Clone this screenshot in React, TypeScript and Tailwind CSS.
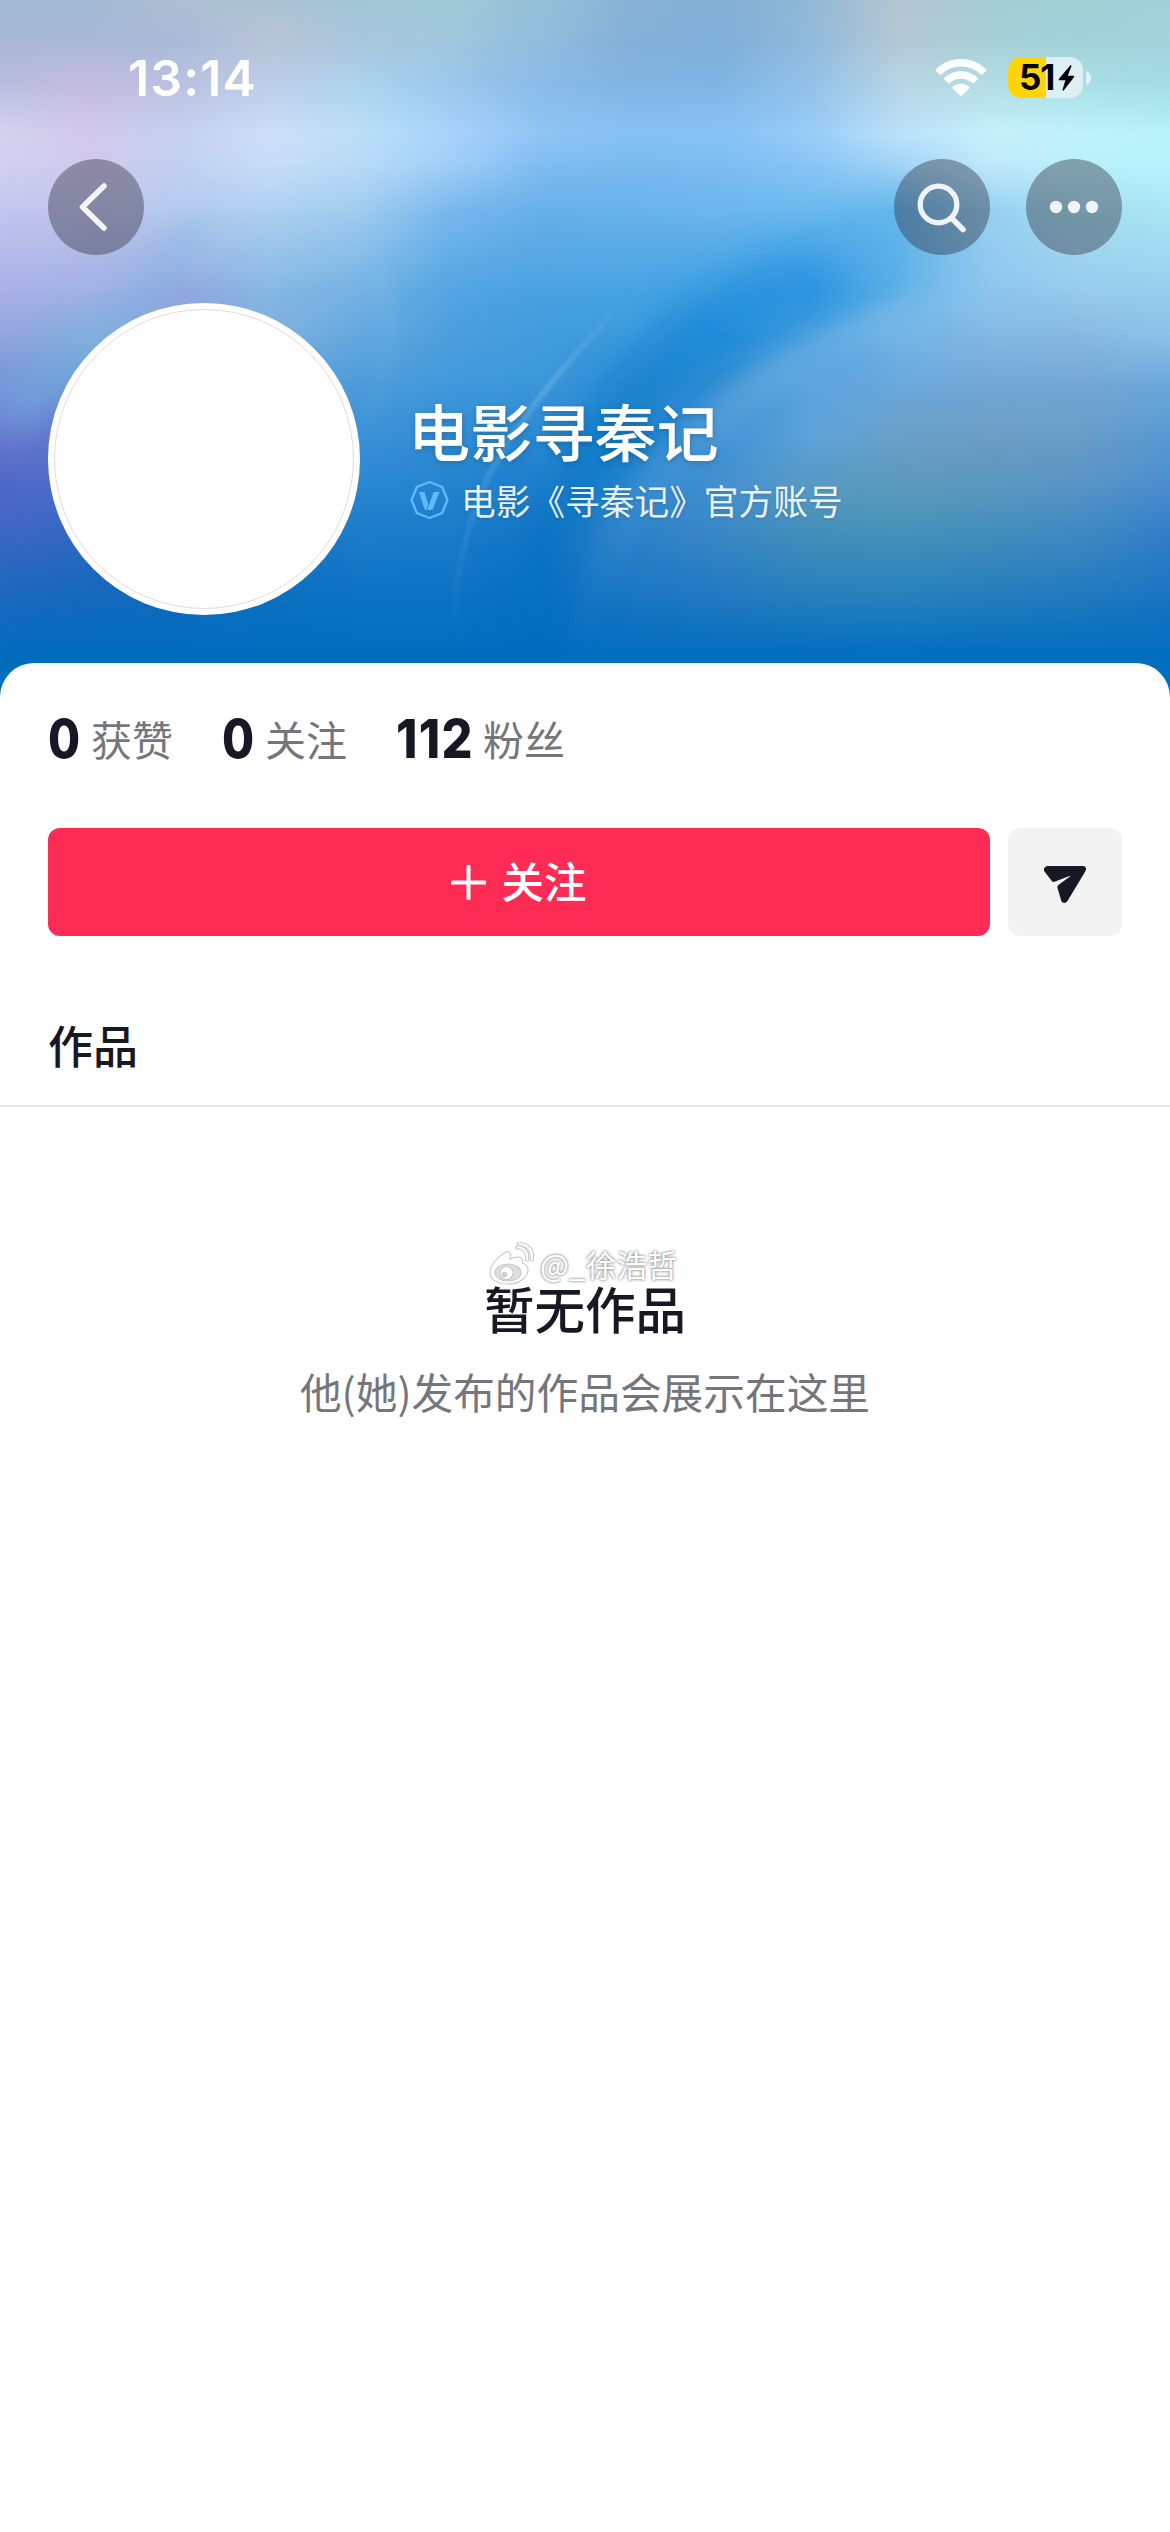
import React from "react";

const WALL_W = 1170;
const WALL_H = 720;

type Row = { y: number; colors: string[] };

/* Colour rows of the wallpaper, 14 evenly spaced stops each, left to right. */
const ROWS: Row[] = [
  { y: 0, colors: ["#9fb8d2", "#a3bad2", "#b0bfd2", "#a9c2d2", "#a0c6d6", "#a1cad6", "#96bfd6", "#88b4d4", "#84b0d4", "#92b8d4", "#b4c6d0", "#a4cdd2", "#a3d1d4", "#a4d2d8"] },
  { y: 40, colors: ["#a8b9d6", "#a9b8d6", "#a9bbd6", "#b8c4d6", "#a8c5da", "#a1c7dc", "#92bcdc", "#84b1d8", "#80afd8", "#90b9da", "#b4c8d4", "#a8d0d6", "#a2d2d8", "#a3d3dc"] },
  { y: 80, colors: ["#b8bbdc", "#c2bbdd", "#b8c1e0", "#bccce6", "#acd2ec", "#9cc7ea", "#8abae6", "#82b4e2", "#80b4e2", "#92c0e6", "#b8d4e2", "#b2dce4", "#a6dde4", "#a4dbe4"] },
  { y: 135, colors: ["#d4d3ef", "#d2c9ea", "#c6d0f0", "#cfe0f8", "#bce0f8", "#a9d2fa", "#90c5f4", "#85c0f2", "#86c2f4", "#98ccf8", "#bce2fa", "#c8f0fa", "#c0f3fc", "#baf2fa"] },
  { y: 165, colors: ["#d1d0f0", "#d0c9ed", "#c1d0f2", "#c7def8", "#b8daf6", "#a0cef8", "#7fbcf0", "#7abaee", "#7cbcf0", "#88c4f4", "#a0d4f6", "#c0e8fb", "#baf0fa", "#b8f2fb"] },
  { y: 210, colors: ["#c2c6ee", "#c2c3ea", "#b6cbee", "#aed0f0", "#a0ccef", "#78b8ec", "#68b0e8", "#68b3ea", "#6cb6ec", "#6cbaee", "#62b6ec", "#98d0f2", "#a6dff2", "#aae6f4"] },
  { y: 290, colors: ["#aab0e6", "#a2b2e4", "#92a8de", "#86b8e2", "#74b2e2", "#54a5e2", "#4aa2e0", "#48a3e2", "#3fa0e2", "#3098e2", "#62b2e8", "#8ec5ec", "#98cbec", "#98ceec"] },
  { y: 335, colors: ["#94a6de", "#84acdc", "#8c9edc", "#7fb0de", "#64a9de", "#4c9fdc", "#429cdc", "#3c9adc", "#2a90da", "#4a9fde", "#72b4e4", "#84b8e2", "#88b8e0", "#8cc2e8"] },
  { y: 380, colors: ["#7a94d8", "#6c98d6", "#6c98d6", "#62a2da", "#4e9cda", "#429adc", "#3c98da", "#2c8cd4", "#3a8fd4", "#5ca5dc", "#6caade", "#74a8d6", "#76a8d4", "#6caadc"] },
  { y: 440, colors: ["#6571cc", "#5c76cc", "#4c84d0", "#4090d4", "#3a90d6", "#318cd4", "#2a88d2", "#2084ce", "#4292d4", "#5ca2d8", "#699fc6", "#6c9dc2", "#689cc6", "#5698d2"] },
  { y: 485, colors: ["#5068c6", "#4a70c8", "#3a7ccc", "#3086d0", "#2a88d2", "#2484ce", "#1c7ecc", "#2c86d0", "#4490d0", "#5899c4", "#5c9bba", "#5c98be", "#5894c6", "#4a8ed0"] },
  { y: 530, colors: ["#4066c2", "#3268c2", "#226ec4", "#1a78c6", "#1c7cca", "#1a7cca", "#1276c6", "#2e82c8", "#3a88c6", "#4490ba", "#4693b8", "#448ebc", "#408ac2", "#347ec8"] },
  { y: 600, colors: ["#1a68be", "#1268bc", "#0c6cbe", "#0a70c0", "#0c72c2", "#0c72c2", "#066ebe", "#1875c2", "#2078c0", "#247ebc", "#2480bc", "#227cbc", "#1e78be", "#1873c2"] },
  { y: 655, colors: ["#006cbc", "#006cbc", "#006cbc", "#006dbc", "#006dbc", "#006dbc", "#006cbc", "#026ebe", "#026ebe", "#026ebe", "#026ebe", "#026ebe", "#026ebe", "#026ebe"] },
];

function Wallpaper() {
  return (
    <svg className="absolute inset-0 h-[720px] w-full" viewBox={`0 0 ${WALL_W} ${WALL_H}`} preserveAspectRatio="none" aria-hidden="true">
      <defs>
        {ROWS.map((row, i) => (
          <linearGradient key={i} id={`row${i}`} x1="0" y1="0" x2="1" y2="0">
            {row.colors.map((c, k) => (
              <stop key={k} offset={k / (row.colors.length - 1)} stopColor={c} />
            ))}
          </linearGradient>
        ))}
        {ROWS.slice(1).map((row, i) => (
          <React.Fragment key={i}>
            <linearGradient id={`fade${i + 1}`} gradientUnits="userSpaceOnUse" x1="0" y1={ROWS[i].y} x2="0" y2={row.y}>
              <stop offset="0" stopColor="#fff" stopOpacity="0" />
              <stop offset="1" stopColor="#fff" stopOpacity="1" />
            </linearGradient>
            <mask id={`mask${i + 1}`} maskUnits="userSpaceOnUse" x="-100" y={ROWS[i].y} width={WALL_W + 200} height={WALL_H + 100 - ROWS[i].y}>
              <rect x="-100" y={ROWS[i].y} width={WALL_W + 200} height={WALL_H + 100 - ROWS[i].y} fill={`url(#fade${i + 1})`} />
            </mask>
          </React.Fragment>
        ))}
        <filter id="soft16" x="-30%" y="-30%" width="160%" height="160%"><feGaussianBlur stdDeviation="16" /></filter>
        <filter id="soft9" x="-30%" y="-30%" width="160%" height="160%"><feGaussianBlur stdDeviation="9" /></filter>
        <filter id="soft2" x="-30%" y="-30%" width="160%" height="160%"><feGaussianBlur stdDeviation="1.6" /></filter>
        <linearGradient id="ribbon" gradientUnits="userSpaceOnUse" x1="850" y1="250" x2="540" y2="640">
          <stop offset="0" stopColor="#2590e0" stopOpacity="0.1" />
          <stop offset="0.2" stopColor="#1e8cdc" stopOpacity="0.6" />
          <stop offset="0.45" stopColor="#1080cc" stopOpacity="0.65" />
          <stop offset="0.75" stopColor="#0470c0" stopOpacity="0.5" />
          <stop offset="1" stopColor="#006cbc" stopOpacity="0" />
        </linearGradient>
        <linearGradient id="rim" gradientUnits="userSpaceOnUse" x1="950" y1="290" x2="570" y2="620">
          <stop offset="0" stopColor="#8cc4ec" stopOpacity="0.3" />
          <stop offset="0.5" stopColor="#5ca6de" stopOpacity="0.55" />
          <stop offset="1" stopColor="#2a80cc" stopOpacity="0.1" />
        </linearGradient>
        <linearGradient id="streak" gradientUnits="userSpaceOnUse" x1="635" y1="300" x2="456" y2="640">
          <stop offset="0" stopColor="#8cc8ee" stopOpacity="0" />
          <stop offset="0.3" stopColor="#8cc4e8" stopOpacity="0.35" />
          <stop offset="0.7" stopColor="#6cb4e0" stopOpacity="0.2" />
          <stop offset="1" stopColor="#5cacdc" stopOpacity="0" />
        </linearGradient>
      </defs>
      <rect width={WALL_W} height={WALL_H} fill="url(#row0)" />
      {ROWS.slice(1).map((row, i) => (
        <rect key={i} x="0" y={ROWS[i].y} width={WALL_W} height={WALL_H - ROWS[i].y} fill={`url(#row${i + 1})`} mask={`url(#mask${i + 1})`} />
      ))}
      <path d="M860 215 Q700 275 618 374 Q540 470 512 620 L538 640 Q560 550 610 480 Q655 422 716 372 Q800 310 920 275 Z" fill="url(#ribbon)" filter="url(#soft16)" />
      <path d="M970 296 Q840 330 752 392 Q670 455 630 510 Q595 570 582 640" fill="none" stroke="url(#rim)" strokeWidth="34" filter="url(#soft9)" />
      <path d="M0 385 Q100 330 190 215 L215 215 Q130 350 0 450 Z" fill="#76b8e2" fillOpacity="0.4" filter="url(#soft16)" />
      <path d="M378 265 Q410 340 362 440 Q402 340 372 270 Z" fill="#9ccaf0" fillOpacity="0.3" filter="url(#soft9)" />
      <path d="M650 275 Q530 395 489 475 Q450 560 456 640" fill="none" stroke="url(#streak)" strokeWidth="6" filter="url(#soft2)" />
    </svg>
  );
}

function StatusBar() {
  return (
    <div className="flex h-[156px] items-start justify-between pl-[128px] pr-[79px]">
      <span className="mt-[48px] font-['Inter'] text-[50px] font-semibold leading-[60px] tracking-[1.1px] text-white">13:14</span>
      <div className="mt-[57px] flex items-start">
        <svg className="mt-[1px] h-[40px] w-[52px]" viewBox="0 0 52 40">
          <path d="M26 1C16 1 7.300 4.800 1 11.200a1.200 1.200 0 0 0 0 1.700l3.600 3.500a1.200 1.200 0 0 0 1.700 0A28 28 0 0 1 26 8.500a28 28 0 0 1 19.700 7.900 1.200 1.200 0 0 0 1.700 0l3.600-3.500a1.200 1.200 0 0 0 0-1.700C44.700 4.800 36 1 26 1Z" fill="#fff" />
          <path d="M26 13.300c-6.500 0-12.300 2.500-16.600 6.500a1.200 1.200 0 0 0 0 1.700l3.700 3.600c.5.500 1.200.5 1.700 0A16.300 16.300 0 0 1 26 20.800c4.300 0 8.200 1.600 11.200 4.300.5.500 1.200.5 1.700 0l3.700-3.600a1.200 1.200 0 0 0 0-1.700c-4.300-4-10.100-6.500-16.600-6.500Z" fill="#fff" />
          <path d="M26 25.800c-3.200 0-6 1.100-8.200 2.900-.6.500-.6 1.300-.1 1.800l7.400 7.200c.5.500 1.300.5 1.800 0l7.400-7.200c.5-.5.500-1.300-.1-1.800a13 13 0 0 0-8.200-2.900Z" fill="#fff" />
        </svg>
        <div className="ml-[21px] flex h-[41px] w-[75px] items-center overflow-hidden rounded-[13px] bg-[linear-gradient(90deg,#ffd40a_0_38px,#dcf0f3_38px)] pl-[11px]">
          <span className="w-[36px] font-['Inter'] text-[35px] font-bold leading-[41px] tracking-[-1.2px] text-black">51</span>
          <svg className="ml-[3px] h-[26px] w-[17px] shrink-0" viewBox="0 0 17 26">
            <path d="M12.200.500 1 13.800c-.5.700-.2 1.500.6 1.500h5.800L4.600 24.600c-.3 1 .6 1.400 1.200.7L16 12.200c.5-.7.200-1.500-.6-1.500H9.800L13.400 1.200c.3-1-.6-1.400-1.200-.7Z" fill="#000" />
          </svg>
        </div>
        <svg className="ml-[3px] mt-[14px] h-[14px] w-[5px]" viewBox="0 0 5 14"><path d="M0 0C3 1 5 4 5 7S3 13 0 14Z" fill="#dcf3f6" /></svg>
      </div>
    </div>
  );
}

function RoundButton({ children, label }: { children: React.ReactNode; label: string }) {
  return (
    <button aria-label={label} className="flex size-24 items-center justify-center rounded-full bg-[#2a2b3a]/40">
      {children}
    </button>
  );
}

function NavBar() {
  return (
    <div className="mt-[3px] flex items-center justify-between px-12">
      <RoundButton label="返回">
        <svg className="size-24" viewBox="0 0 96 96" fill="none">
          <path d="M56 27 34.500 48 56 69" stroke="#f3f5fa" strokeWidth="5.500" strokeLinecap="round" strokeLinejoin="round" />
        </svg>
      </RoundButton>
      <div className="flex gap-9">
        <RoundButton label="搜索">
          <svg className="size-24" viewBox="0 0 96 96" fill="none" stroke="#f0f4fa">
            <circle cx="44.500" cy="45.500" r="18.300" strokeWidth="5.300" />
            <path d="M57.500 59 69 70.500" strokeWidth="5.500" strokeLinecap="round" />
          </svg>
        </RoundButton>
        <RoundButton label="更多">
          <svg className="size-24" viewBox="0 0 96 96" fill="#f0f5fa">
            <circle cx="30" cy="48" r="6.200" />
            <circle cx="48" cy="48" r="6.200" />
            <circle cx="66" cy="48" r="6.200" />
          </svg>
        </RoundButton>
      </div>
    </div>
  );
}

function Profile() {
  return (
    <div className="mt-12 flex px-12">
      <div className="flex size-[312px] shrink-0 rounded-full bg-white p-1.5">
        <div className="flex-1 rounded-full border border-[#e0dcdc] bg-[#fefefe]" />
      </div>
      <div className="ml-[50px] pt-[85px]">
        <h1 className="-ml-[2px] text-[62px] font-medium leading-[84px] tracking-[0.2px] text-white [text-shadow:0_2px_6px_rgba(0,0,0,0.2)]">电影寻秦记</h1>
        <div className="mt-[4px] flex items-center">
          <svg className="h-[40px] w-[39px]" viewBox="0 0 39 40" fill="none">
            <path d="M19.500 2 32 6.800 37.500 20 32 33.200 19.500 38 7 33.200 1.500 20 7 6.800Z" stroke="#62b8fb" strokeWidth="2.400" strokeLinejoin="round" />
            <path d="M9 12H14.500L18.300 24.500 16.300 30Q14.800 30 14.300 28.500ZM23.500 12H29.500L23 28.500Q22.200 30 20.500 30H17.200Z" fill="#62b8fb" />
          </svg>
          <span className="ml-[12px] text-[34.700px] leading-[48px] text-white/90 [text-shadow:0_1px_3px_rgba(0,0,0,0.15)]">电影《寻秦记》官方账号</span>
        </div>
      </div>
    </div>
  );
}

function Stat({ value, label, width }: { value: string; label: string; width: string }) {
  return (
    <div className="flex items-center">
      <span className={`${width} origin-left whitespace-nowrap font-['Inter'] text-[54px] font-extrabold leading-[60px] text-[#161823]`}>{value}</span>
      <span className="-mt-[3px] text-[41px] leading-[60px] text-[#75767b]">{label}</span>
    </div>
  );
}

function Watermark() {
  return (
    <div className="absolute left-[488px] top-[578px] flex items-center">
      <svg className="h-[46px] w-[48px]" viewBox="0 0 48 46" fill="#fff" stroke="#c9c9c9" strokeWidth="1.100">
        <path d="M18 11C10 15 2 24 2 32c0 7 8 11 18 11 13 0 20-8 20-14 0-4-3-6-6-7 1-3 0-6-4-6-3 0-6 1-8 2 1-4 1-9-4-7Z" />
        <ellipse cx="20" cy="31.500" rx="13" ry="8.500" fill="#dedede" />
        <circle cx="18.500" cy="32" r="6.500" />
        <circle cx="16.500" cy="33.500" r="2.200" fill="#d0d0d0" />
        <path d="M28 8c6-1 11 4 9 11l3 1c3-9-4-17-12-15ZM29 2c11-2 19 7 16 18l-3-1c2-9-4-15-12-14Z" />
      </svg>
      <span className="ml-[4px] text-[30.500px] leading-[40px] text-white [text-shadow:0_0_3px_#888,0_0_3px_#aaa]">@_徐浩哲</span>
    </div>
  );
}

export default function App() {
  return (
    <div className="relative flex h-[2532px] w-[1170px] flex-col overflow-hidden bg-white font-['Noto_Sans_CJK_SC',sans-serif]">
      <Wallpaper />
      <header className="relative h-[663px]">
        <StatusBar />
        <NavBar />
        <Profile />
      </header>
      <main className="relative flex-1 rounded-t-[34px] bg-white">
        <div className="flex gap-[49px] px-12 pt-[46px]">
          <Stat value="0" label="获赞" width="w-[43px] scale-x-[0.86]" />
          <Stat value="0" label="关注" width="w-[43px] scale-x-[0.86]" />
          <Stat value="112" label="粉丝" width="w-[87px] scale-x-[0.9] tracking-[1.5px]" />
        </div>
        <div className="mt-[59px] flex gap-[18px] px-12">
          <button className="flex h-[108px] w-[942px] items-center justify-center gap-[15px] rounded-[12px] bg-[#fe2c55] text-white">
            <svg className="size-[35px]" viewBox="0 0 35 35"><path d="M17.500 1.500v32M1.500 17.500h32" stroke="#fff" strokeWidth="4" strokeLinecap="round" /></svg>
            <span className="-mt-[5px] text-[42.500px] font-medium leading-[60px]">关注</span>
          </button>
          <button aria-label="私信" className="flex h-[108px] w-[114px] items-center justify-center rounded-[12px] bg-[#f3f3f4]">
            <svg className="mt-[6px] h-[40px] w-[44px]" viewBox="0 0 44 40" fill="#161823">
              <path d="M4.500 1H39.500Q44.500 1.500 42.500 6L24.500 36Q21.500 39.500 18.500 36.500L14.500 23Q14 21 16 19.500L27 11.500Q27.500 10.800 26.500 11L11.500 16.800Q10 17.300 8.800 16L1.500 6.500Q-.500 2.500 4.500 1Z" />
            </svg>
          </button>
        </div>
        <div className="flex h-[171px] items-end border-b-2 border-[#e8e8e9] px-12 pb-[30px]">
          <span className="text-[45px] font-medium leading-[60px] text-[#161823]">作品</span>
        </div>
        <div className="flex flex-col items-center pt-[164px]">
          <h2 className="text-[50.500px] font-medium leading-[72px] text-[#161823]">暂无作品</h2>
          <p className="mt-[18px] text-[41.700px] leading-[60px] text-[#75767b]">他(她)发布的作品会展示在这里</p>
        </div>
        <Watermark />
      </main>
    </div>
  );
}
